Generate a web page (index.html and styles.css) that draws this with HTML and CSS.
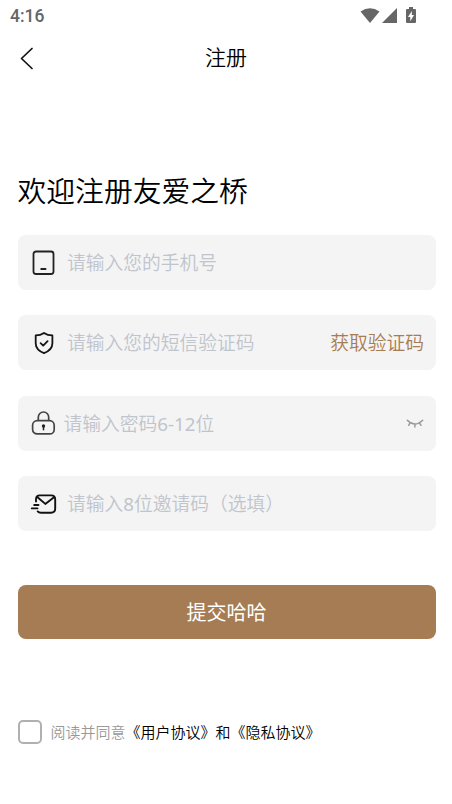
FILE: index.html
```html
<!DOCTYPE html>
<html lang="zh-CN">
<head>
<meta charset="utf-8">
<meta name="viewport" content="width=device-width, initial-scale=1">
<title>注册</title>
<link rel="stylesheet" href="styles.css">
</head>
<body>
<div class="status">
  <span class="time">4:16</span>
  <svg class="status-icons" width="58" height="18" viewBox="0 0 58 18" fill="#666">
    <path d="M0.5 4.5Q10 -2 19.500 4.500L10 16z"/>
    <path d="M37 1v15H22z"/>
    <path d="M49 0h4v2h2q1 0 1 1v12q0 1-1 1h-8q-1 0-1-1V3q0-1 1-1h2z"/>
    <path fill="#fff" d="M51.800 4v4H54l-3.700 6.300V10H48z"/>
  </svg>
</div>
<header class="nav">
  <svg class="back" width="16" height="24" viewBox="0 0 16 24" fill="none" stroke="#111" stroke-width="1.700" stroke-linecap="round" stroke-linejoin="round"><path d="M13 2.500L2.500 12.500L13 22.500"/></svg>
  <h1>注册</h1>
</header>
<main>
  <h2>欢迎注册友爱之桥</h2>
  <div class="field">
    <svg class="icon" width="28" height="28" viewBox="0 0 28 28" fill="none" stroke="#222" stroke-width="1.800" stroke-linecap="round"><rect x="3.500" y="2.500" width="20" height="22.500" rx="2.500"/><path d="M11.200 20h4.400"/></svg>
    <span class="hint">请输入您的手机号</span>
  </div>
  <div class="field">
    <svg class="icon" width="28" height="28" viewBox="0 0 28 28" fill="none" stroke="#151515" stroke-width="1.800" stroke-linecap="round" stroke-linejoin="round"><path d="M14 3.900C11.500 5.600 8.800 6.300 5.700 6.400V14.200C5.700 19.200 9.200 22.200 14 24.200C18.800 22.200 22.400 19.200 22.400 14.200V6.400C19.200 6.300 16.500 5.600 14 3.900z"/><path d="M10.600 14.200l2.600 2.400 4.400-4.500"/></svg>
    <span class="hint">请输入您的短信验证码</span>
    <span class="code">获取验证码</span>
  </div>
  <div class="field password">
    <svg class="icon" width="28" height="28" viewBox="0 0 28 28" fill="none" stroke="#444" stroke-width="1.700"><rect x="2.600" y="11.700" width="21.600" height="13.200" rx="4.500"/><path d="M8.300 11.500V8.200a5.200 5.200 0 0 1 10.400 0V11.500"/><circle cx="13.500" cy="17" r="1.700" fill="#222" stroke="none"/><path stroke="#222" stroke-width="1.500" d="M13.500 17v4.300"/></svg>
    <span class="hint">请输入密码<span class="num">6-12</span>位</span>
    <svg class="eye" width="18" height="10" viewBox="0 0 18 10" fill="none" stroke="#999" stroke-width="1.500" stroke-linecap="round"><path d="M1.300 1.200Q8.700 9 16.700 1.200M4 4L2.700 6.300M8.900 5.400V8M13.500 4l1.500 2.300"/></svg>
  </div>
  <div class="field">
    <svg class="icon" width="28" height="28" viewBox="0 0 28 28" fill="none" stroke="#111" stroke-width="1.900" stroke-linecap="round" stroke-linejoin="round"><path d="M6 11.500V9.200Q6 5.400 9.800 5.400H21.200Q25.200 5.400 25.200 9.400V18.500Q25.200 22.700 21 22.700H11Q8.700 22.700 7.700 21.400"/><path d="M7.500 7.200L15.300 13.900L24 7.200M4.200 15H8.500M1.800 18.400H7.500"/></svg>
    <span class="hint">请输入<span class="num">8</span>位邀请码（选填）</span>
  </div>
  <button class="submit" type="button">提交哈哈</button>
  <div class="agreement">
    <span class="checkbox"></span>
    <p>阅读并同意<b>《用户协议》和《隐私协议》</b></p>
  </div>
</main>
</body>
</html>
```
FILE: styles.css
```css
* {
  box-sizing: border-box;
}

body {
  margin: 0;
  background: #fff;
  color: #000;
  font-family: "Noto Sans", "Noto Sans CJK SC", sans-serif;
  font-weight: 350;
}

svg {
  display: block;
  flex: none;
}

.status {
  display: flex;
  justify-content: space-between;
  align-items: center;
  height: 32px;
  padding: 0 34px 0 10px;
}

.time {
  color: #666;
  font: 500 17.5px/32px Roboto, sans-serif;
}

.nav {
  display: grid;
  grid-template-columns: 60px 1fr 60px;
  align-items: center;
  height: 52px;
}

.back {
  margin-left: 19px;
}

h1 {
  margin: 0;
  padding-bottom: 2px;
  font-size: 21px;
  font-weight: 350;
  line-height: 50px;
  text-align: center;
}

main {
  padding: 86.600px 16.500px 0 17.500px;
}

h2 {
  margin: 0 0 24.400px;
  font-size: 28.8px;
  font-weight: 350;
  line-height: 40px;
}

.field {
  display: flex;
  align-items: center;
  height: 55px;
  margin-bottom: 25.400px;
  padding: 1px 12px 0;
  border-radius: 8px;
  background: #f4f4f4;
  font-size: 18.750px;
  line-height: 28px;
  white-space: nowrap;
}

.icon {
  margin: -1px 9.500px 0 0;
}

.field:first-of-type .icon {
  margin-top: 0;
}

.password .icon {
  margin-right: 6px;
}

.hint {
  color: #c0c4cc;
}

.num {
  font-weight: 400;
}

.code {
  margin-left: auto;
  margin-right: -0.500px;
  color: #a67c52;
}

.eye {
  margin-left: auto;
  margin-top: 1px;
}

.submit {
  display: block;
  width: 100%;
  height: 54px;
  margin-top: 54.200px;
  padding: 1px 0 0;
  border: 0;
  border-radius: 8px;
  background: #a67c55;
  color: #fff;
  font: inherit;
  font-size: 20px;
  font-weight: 400;
  line-height: 53px;
}

.agreement {
  display: flex;
  align-items: center;
  margin-top: 80.400px;
  color: #999;
  font-size: 15px;
  line-height: 24px;
}

.checkbox {
  width: 24px;
  height: 24px;
  margin-right: 9px;
  border: 2px solid #b0b0b0;
  border-radius: 5px;
}

.agreement p {
  margin: 0;
}

.agreement b {
  color: #000;
  font-weight: 350;
}
```
